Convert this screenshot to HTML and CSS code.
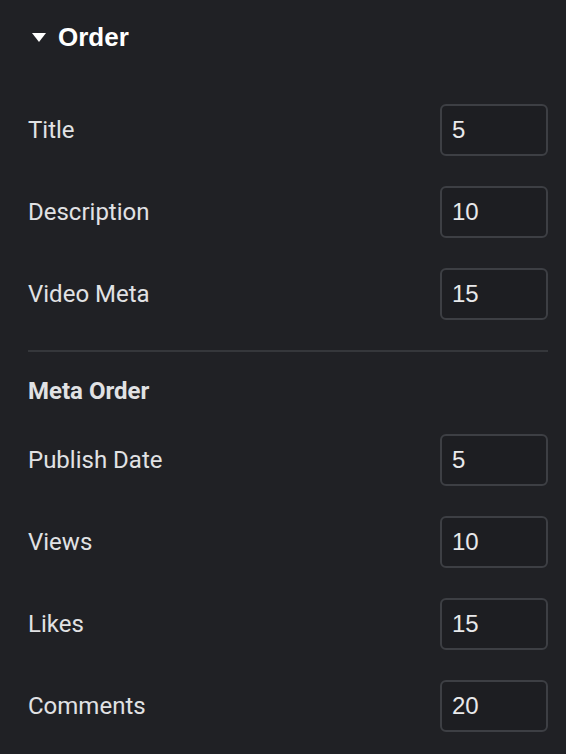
FILE: index.html
```html
<!DOCTYPE html>
<html lang="en">
  <head>
    <meta charset="UTF-8" />
    <meta name="viewport" content="width=device-width, initial-scale=1.0" />
    <title>Order</title>
    <link rel="stylesheet" href="styles.css">
  </head>
  <body>
    <div class="panel">
      <!-- Section toggle -->
      <div class="section-title">
        <span class="caret"></span>
        <span>Order</span>
      </div>

      <div class="control">
        <label class="control-label">Title</label>
        <input class="control-input" type="number" value="5">
      </div>
      <div class="control">
        <label class="control-label">Description</label>
        <input class="control-input" type="number" value="10">
      </div>
      <div class="control">
        <label class="control-label">Video Meta</label>
        <input class="control-input" type="number" value="15">
      </div>

      <hr class="separator">

      <div class="sub-heading">Meta Order</div>

      <div class="control">
        <label class="control-label">Publish Date</label>
        <input class="control-input" type="number" value="5">
      </div>
      <div class="control">
        <label class="control-label">Views</label>
        <input class="control-input" type="number" value="10">
      </div>
      <div class="control">
        <label class="control-label">Likes</label>
        <input class="control-input" type="number" value="15">
      </div>
      <div class="control">
        <label class="control-label">Comments</label>
        <input class="control-input" type="number" value="20">
      </div>
    </div>
  </body>
</html>
```

FILE: styles.css
```css
* {
  margin: 0;
  padding: 0;
  box-sizing: border-box;
}

body,
html {
  height: 100%;
}

body {
  background-color: #202125;
  font-family: Roboto, "Liberation Sans", sans-serif;
  color: #e1e2e4;
}

.panel {
  padding: 22px 18px 0 28px;
}

.section-title {
  display: flex;
  align-items: center;
  gap: 12px;
  height: 30px;
  padding-left: 4px;
  margin-bottom: 52px;
  font-family: "Liberation Sans", Arial, sans-serif;
  font-weight: bold;
  font-size: 26px;
  color: #ffffff;
}

.caret {
  width: 0;
  height: 0;
  border-left: 7.5px solid transparent;
  border-right: 7.5px solid transparent;
  border-top: 9px solid #ffffff;
}

.control {
  display: flex;
  align-items: center;
  justify-content: space-between;
  height: 52px;
  margin-bottom: 30px;
}

.control-label {
  font-size: 24px;
}

.control-input {
  width: 108px;
  height: 52px;
  padding: 0 10px;
  background-color: #1d1e22;
  border: 2px solid #3d3f44;
  border-radius: 6px;
  color: #e8e9eb;
  font-family: "Liberation Sans", Arial, sans-serif;
  font-size: 24px;
  outline: none;
  -moz-appearance: textfield;
}

.control-input::-webkit-inner-spin-button,
.control-input::-webkit-outer-spin-button {
  -webkit-appearance: none;
}

.separator {
  border: none;
  height: 2px;
  background-color: #35373b;
  margin-bottom: 24px;
}

.sub-heading {
  height: 30px;
  line-height: 30px;
  font-size: 24px;
  font-weight: bold;
  margin-bottom: 28px;
}
```
